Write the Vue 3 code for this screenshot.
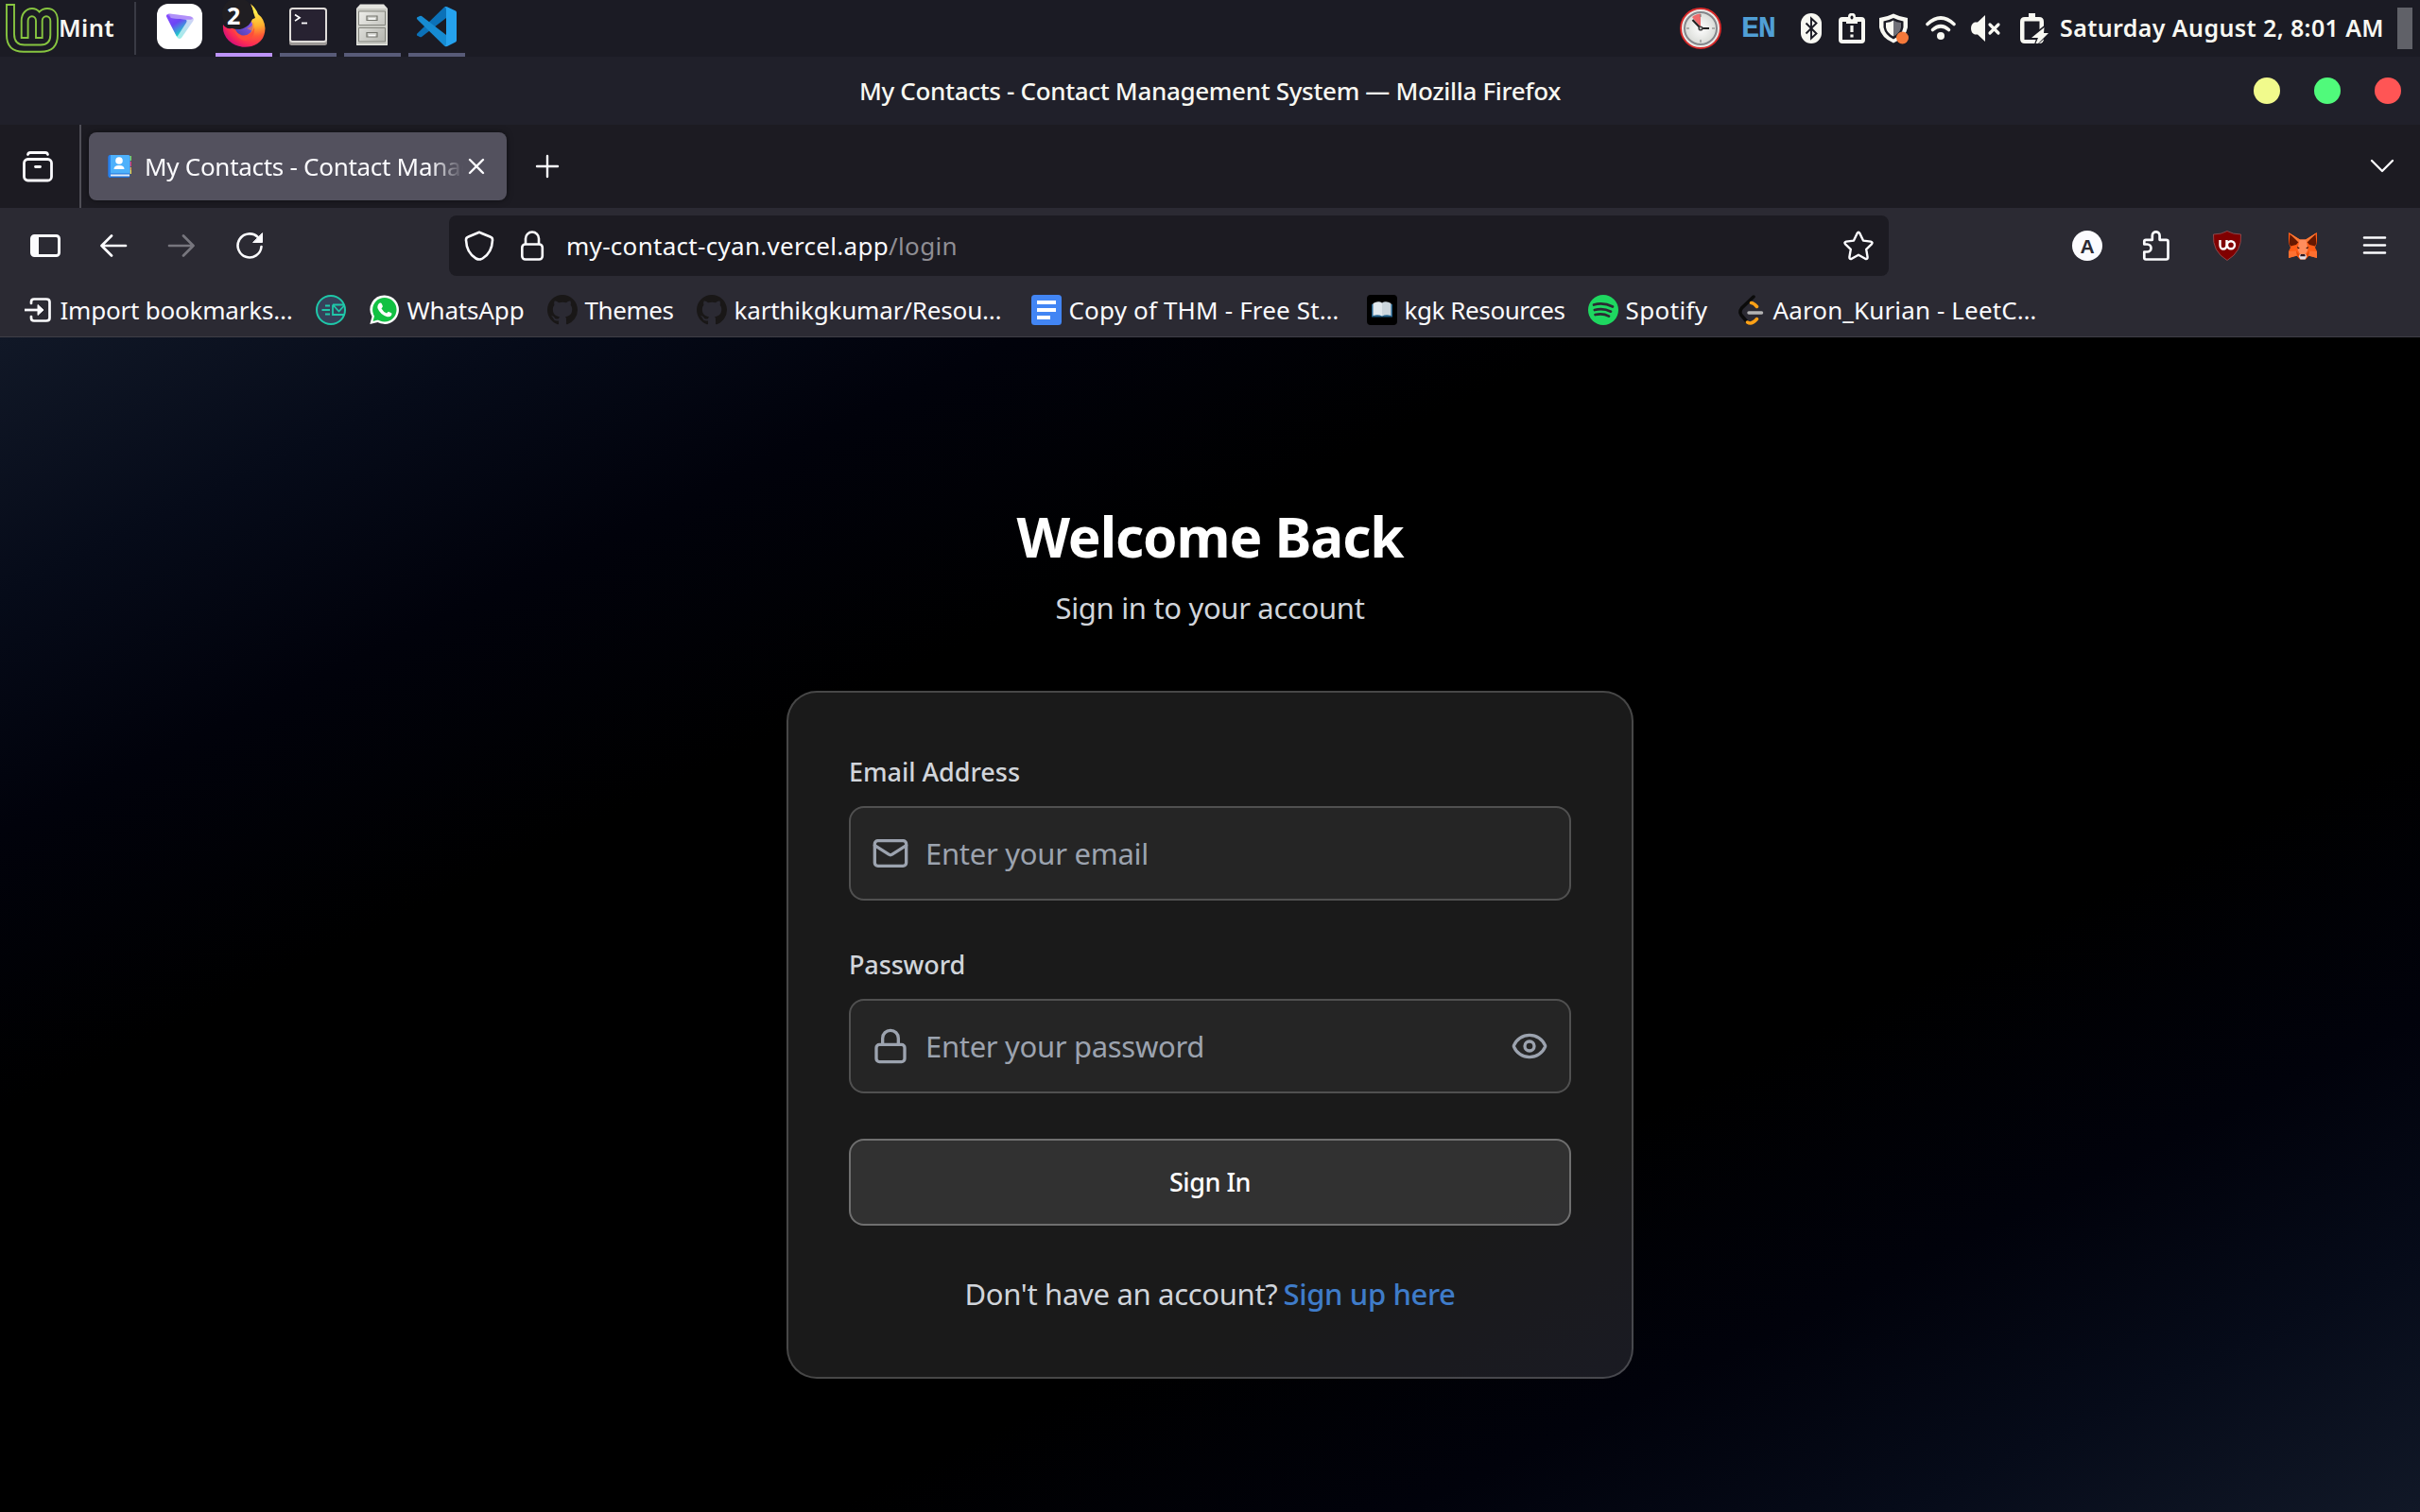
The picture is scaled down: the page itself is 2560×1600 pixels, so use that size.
<script setup>
const vFit = {
  mounted(el, { value }) {
    const range = document.createRange()
    range.selectNodeContents(el)
    const natural = range.getBoundingClientRect().width
    el.style.letterSpacing = (value - natural) / el.textContent.trim().length + 'px'
  }
}

const bookmarks = [
  { icon: 'import', label: 'Import bookmarks…', width: 246 },
  { icon: 'tempmail', label: '', width: 0 },
  { icon: 'whatsapp', label: 'WhatsApp', width: 124 },
  { icon: 'github', label: 'Themes', width: 94 },
  { icon: 'github', label: 'karthikgkumar/Resou…', width: 283 },
  { icon: 'docs', label: 'Copy of THM - Free St…', width: 286 },
  { icon: 'book', label: 'kgk Resources', width: 170 },
  { icon: 'spotify', label: 'Spotify', width: 87 },
  { icon: 'leetcode', label: 'Aaron_Kurian - LeetC…', width: 279 }
]
</script>

<template>
  <div class="desktop">
    <header class="panel">
      <div class="menu">
        <svg class="mint" width="62" height="60" viewBox="0 0 62 60" fill="none" stroke="#87c540" stroke-width="1.9">
          <path d="M7 5H15V36Q15 47.5 26 47.5H43Q53.3 47.5 53.3 37V22a4.3 4.8 0 0 0-8.6 0V40H38V22a4.2 4.8 0 0 0-8.4 0V40H22.7V22C22.7 14 28 9 34 9Q38.5 9 41.6 12.6Q45 9 50 9C57 9 61 14 61 22V37Q61 54.8 43 54.8H25Q7 54.8 7 37Z" />
        </svg>
        <span v-fit="59" class="menu-label">Mint</span>
      </div>
      <div class="divider"></div>
      <div class="tasks">
        <div class="task plain">
          <svg width="60" height="60" viewBox="0 0 60 60">
            <defs>
              <linearGradient id="pv1" x1="0" y1="0" x2=".6" y2="1"><stop offset="0" stop-color="#8a4dff" /><stop offset=".5" stop-color="#6b45f5" /><stop offset="1" stop-color="#15e0c4" /></linearGradient>
              <linearGradient id="pv2" x1="1" y1="0" x2=".4" y2="1"><stop offset="0" stop-color="#dccbfa" /><stop offset="1" stop-color="#9df0e8" /></linearGradient>
            </defs>
            <rect x="4" y="4" width="48" height="48" rx="12" fill="#fff" />
            <path d="M16 14.5 L40 17.5 Q44 18.500 42.500 22 L30 40 Q27.500 42.500 25 39 Z" fill="url(#pv2)" />
            <path d="M14 17.500 Q13.500 14.500 17 15 L19 19 L34 20.500 Q36.500 21.500 35 24 L26 38 Q25.500 39.500 24 37 Z" fill="url(#pv1)" />
            <path d="M15 15.200 Q16 14.300 18 14.500 L39 17.300 Q42 18 42 20 Q38 21.500 33 20.400 L19 18.900 Z" fill="#a878fa" opacity=".75" />
          </svg>
        </div>
        <div class="task active">
          <svg width="60" height="60" viewBox="0 0 60 60">
            <defs>
              <radialGradient id="ff1" cx=".8" cy=".15" r=".95"><stop offset="0" stop-color="#fff44f" /><stop offset=".38" stop-color="#ffb02e" /><stop offset=".62" stop-color="#ff5a36" /><stop offset=".85" stop-color="#fb2a55" /><stop offset="1" stop-color="#d81276" /></radialGradient>
              <linearGradient id="ff2" x1="1" y1="0" x2="0" y2="1"><stop offset="0" stop-color="#9059ff" /><stop offset="1" stop-color="#4a3fa8" /></linearGradient>
            </defs>
            <path d="M8 26Q11 31 17 30L42 19Q39 10 37 4Q43 9 45 15Q52 20 52.500 30Q52 45 38 49Q24 52 14 43Q7 36 8 26Z" fill="url(#ff1)" />
            <circle cx="30" cy="28" r="9.500" fill="url(#ff2)" />
            <path d="M18 28Q22 37 30 38Q38 38 41 29Q42 41 32 43Q22 43 18 28Z" fill="#ff4a3c" opacity=".85" />
            <path d="M33 30Q39 29 40 23Q42 29 39 33Z" fill="#ff8a30" opacity=".6" />
            <circle cx="23.500" cy="14.500" r="16.500" fill="#201e22" />
          </svg>
          <span class="badge">2</span>
        </div>
        <div class="task open">
          <svg width="60" height="60" viewBox="0 0 60 60">
            <rect x="10" y="39" width="40" height="9" rx="2.500" fill="#9b9795" />
            <rect x="10" y="8" width="40" height="37" rx="3.500" fill="#dfdcd9" />
            <rect x="12" y="10" width="36" height="33" rx="1.500" fill="#272231" />
            <path d="M16 15.500l5 3.300-5 3.300" fill="none" stroke="#fff" stroke-width="1.700" />
            <path d="M23 24.500h6" stroke="#fff" stroke-width="1.800" />
          </svg>
        </div>
        <div class="task open">
          <svg width="60" height="60" viewBox="0 0 60 60">
            <defs><linearGradient id="cab" x1="0" y1="0" x2="1" y2="1"><stop offset="0" stop-color="#eeeeea" /><stop offset="1" stop-color="#b4b5af" /></linearGradient></defs>
            <path d="M13 9L17 4.500H42L46 9V48H13Z" fill="#e4e4e0" />
            <path d="M13 9H46V48H13Z" fill="#c9cac4" />
            <path d="M15.500 12h28v14.500h-28zM15.500 29.500h28v14.500h-28z" fill="url(#cab)" stroke="#85867f" stroke-width="1" />
            <path d="M24 17h11v4.500h-11zM24 34.500h11v4.500h-11z" fill="#cfd0cb" stroke="#74756e" stroke-width="1.200" />
            <path d="M26 20h7M26 37.500h7" stroke="#fff" stroke-width="1.500" />
            <path d="M13.500 9V47.500H45.500V9" fill="none" stroke="#e9eae4" stroke-width="1" />
          </svg>
        </div>
        <div class="task open">
          <svg width="60" height="60" viewBox="0 0 60 60">
            <path d="M9 37.500q-.6-1 .6-2.200L38 7.500 40 7v12L14 39q-1 .5-2 0Z" fill="#0b71b8" />
            <path d="M9 18.500q-.6 1 .6 2.200L38 48.500 40 49V37L14 17q-1-.5-2 0Z" fill="#168bd2" />
            <path d="M38 7.500Q39 6.500 41 7.200L50 11.500Q51 12 51 13.500V42.500Q51 44 50 44.600L41 49Q39 49.500 38 48.500Q40 49 40 46V10Q40 7 38 7.500Z" fill="#25a2ee" />
          </svg>
        </div>
      </div>
      <div class="tray">
        <svg width="46" height="46" viewBox="0 0 46 46">
          <defs><radialGradient id="clk"><stop offset="0" stop-color="#fff" /><stop offset="1" stop-color="#d9dbd7" /></radialGradient></defs>
          <circle cx="23" cy="23" r="21" fill="#e9e9e7" stroke="#d92a2a" stroke-width="2" />
          <circle cx="23" cy="23" r="17" fill="url(#clk)" stroke="#84868a" stroke-width="2" />
          <path d="M23 22L14 11Q18 7.500 23 7.500Z" fill="#f0696b" />
          <path d="M23 8v3M23 35v3M8 23h3M35 23h3" stroke="#777" stroke-width="1" />
          <path d="M14.500 14L23 23H32" fill="none" stroke="#222" stroke-width="2.200" />
          <circle cx="23" cy="23" r="2.600" fill="#444" /><circle cx="23" cy="23" r="1" fill="#ddd" />
        </svg>
        <span class="lang">EN</span>
        <svg width="24" height="32" viewBox="0 0 24 32">
          <rect x="1" width="22" height="32" rx="11" fill="#f8f8f2" />
          <path d="M6.500 10.500L17.500 21.500 12 26.500V5.500L17.500 10.500 6.500 21.500" fill="none" stroke="#1b1b24" stroke-width="1.900" />
        </svg>
        <svg width="28" height="32" viewBox="0 0 28 32">
          <path d="M4 4H10A4 4.200 0 0 1 18 4H24Q28 4 28 8V28Q28 32 24 32H4Q0 32 0 28V8Q0 4 4 4ZM4 9V28H24V9H20V11H8V9ZM14 2.500a1.500 2 0 1 0 .01 0Z" fill="#f8f8f2" fill-rule="evenodd" />
          <path d="M14 13v7M14 22.500v3" stroke="#f8f8f2" stroke-width="3.200" />
        </svg>
        <svg width="34" height="34" viewBox="0 0 34 34">
          <path d="M17 1.500Q24 5 32 6V16Q30 27 17 32.500Q4 27 2 16V6Q10 5 17 1.500Z" fill="#f8f8f2" />
          <path d="M17 6Q22 8.500 27.500 9.500V16Q26 24 17 28.500Q8 24 6.500 16V9.500Q12 8.500 17 6Z" fill="#1b1b24" />
          <path d="M17 8.500V25.500Q10 22 9 16V11Q14 10.500 17 8.500Z" fill="#f8f8f2" />
          <path d="M17 8.500V25.500Q24 22 25 16V11Q20 10.500 17 8.500Z" fill="#707078" />
          <circle cx="26.500" cy="27" r="6.500" fill="#f5793a" />
        </svg>
        <svg width="32" height="26" viewBox="0 0 32 26" fill="none" stroke="#f8f8f2" stroke-width="3.600" stroke-linecap="round">
          <path d="M2 8.500Q16-4.500 30 8.500" /><path d="M7.500 14.500Q16 7 24.500 14.500" /><circle cx="16" cy="21" r="4" fill="#f8f8f2" stroke="none" />
        </svg>
        <svg width="32" height="30" viewBox="0 0 32 30">
          <path d="M15 1V29L7 21.500H4Q0 20 0 15Q0 10 4 8.500H7Z" fill="#f8f8f2" />
          <path d="M20 11l9 9M29 11l-9 9" stroke="#f8f8f2" stroke-width="3.200" stroke-linecap="round" />
        </svg>
        <svg width="30" height="32" viewBox="0 0 30 32">
          <path d="M9 0h7v4h4q5 0 5 5v18q0 5-5 5H5q-5 0-5-5V9q0-5 5-5h4zM4.500 8.500V28H20.500V8.500Z" fill="#f8f8f2" fill-rule="evenodd" />
          <path d="M25.500 15L12 26H19L16.500 33L30 21H25Z" fill="#f8f8f2" stroke="#1b1b24" stroke-width="3" />
          <path d="M25.500 15L12 26H19L16.500 32H19L30 21H25Z" fill="#f8f8f2" />
        </svg>
        <span v-fit="343" class="clock">Saturday August 2, 8:01 AM</span>
        <div class="corner"></div>
      </div>
    </header>

    <div class="titlebar">
      <span></span>
      <span v-fit="742" class="title">My Contacts - Contact Management System — Mozilla Firefox</span>
      <div class="controls">
        <i class="dot min"></i><i class="dot max"></i><i class="dot close"></i>
      </div>
    </div>

    <div class="tabbar">
      <div class="view">
        <svg width="34" height="34" viewBox="0 0 34 34" fill="none" stroke="#fbfbfe" stroke-width="2.800" stroke-linecap="round">
          <rect x="2.500" y="9.500" width="29" height="22.500" rx="4" /><path d="M6.500 4.500Q7 2.500 9 2.500H25Q27 2.500 27.500 4.500" /><path d="M14.500 17.500H19.500" />
        </svg>
      </div>
      <div class="tab">
        <svg class="favicon" width="26" height="26" viewBox="0 0 26 26">
          <path d="M20 2h5v5h-5z" fill="#7ed957" /><path d="M20 8h5v5h-5z" fill="#e8356d" /><path d="M20 14h5v3h-5z" fill="#f0a03a" /><path d="M20 17h5v4h-5z" fill="#f7d43c" />
          <rect x=".5" y="1" width="23" height="24" rx="2" fill="#1d6fd8" />
          <path d="M3 1H21.500Q23.500 1 23.500 3V20.500H3Z" fill="#4eb1fb" /><path d="M3 21.500H23V23.500H3Z" fill="#e6eef7" /><path d="M.5 3Q.5 1 3 1V25Q.5 25 .5 23Z" fill="#2a82ec" />
          <circle cx="12" cy="7" r="3.800" fill="#fff" /><path d="M6.500 16Q6.500 12 12 12Q17.500 12 17.500 16Z" fill="#fff" />
        </svg>
        <div class="tab-label"><span v-fit="350">My Contacts - Contact Manag</span></div>
        <svg class="x" width="18" height="18" viewBox="0 0 18 18" stroke="#fbfbfe" stroke-width="2.300" stroke-linecap="round"><path d="M2 2L16 16M16 2L2 16" /></svg>
      </div>
      <svg class="plus" width="26" height="26" viewBox="0 0 26 26" stroke="#fbfbfe" stroke-width="2.400" stroke-linecap="round"><path d="M13 2V24M2 13H24" /></svg>
      <svg class="chevron" width="26" height="16" viewBox="0 0 26 16" fill="none" stroke="#fbfbfe" stroke-width="2.300" stroke-linecap="round" stroke-linejoin="round"><path d="M2 2L13 13L24 2" /></svg>
    </div>

    <div class="chrome">
      <div class="toolbar">
        <div class="nav">
          <svg width="32" height="32" viewBox="0 0 32 32"><rect x="1.500" y="5.500" width="29" height="21" rx="3" fill="none" stroke="#fbfbfe" stroke-width="3" /><path d="M2 6H9V26H2Z" fill="#fbfbfe" /></svg>
          <svg width="32" height="32" viewBox="0 0 32 32" fill="none" stroke="#fbfbfe" stroke-width="2.700" stroke-linecap="round" stroke-linejoin="round"><path d="M29 16H3.500M14 5.500L3.500 16L14 26.500" /></svg>
          <svg width="32" height="32" viewBox="0 0 32 32" fill="none" stroke="#77767e" stroke-width="2.700" stroke-linecap="round" stroke-linejoin="round"><path d="M3 16H28.500M18 5.500L28.500 16L18 26.500" /></svg>
          <svg width="32" height="32" viewBox="0 0 32 32" fill="none" stroke="#fbfbfe" stroke-width="2.600" stroke-linecap="round"><path d="M28.500 17A12.500 12.500 0 1 1 25 7.200L26.500 8.500" /><path d="M29.500 3V12.500H20Z" fill="#fbfbfe" stroke-width="1" stroke-linejoin="round" /></svg>
        </div>
        <div class="url">
          <svg width="32" height="32" viewBox="0 0 32 32" fill="none" stroke="#fbfbfe" stroke-width="2.600" stroke-linejoin="round"><path d="M16 1.800L28 6.800Q30 7.500 30 10Q29.500 23.500 19.500 29.500Q16 31.500 12.500 29.500Q2.500 23.500 2 10Q2 7.500 4 6.800Z" /></svg>
          <svg width="32" height="32" viewBox="0 0 32 32" fill="none" stroke="#fbfbfe" stroke-width="2.600"><rect x="5.300" y="14.500" width="21.500" height="16" rx="3.500" /><path d="M9 14.500V8.500A7 7 0 0 1 23 8.500V14.500" /></svg>
          <p class="address"><span v-fit="341">my-contact-cyan.vercel.app</span><span v-fit="73" class="path">/login</span></p>
          <svg width="32" height="32" viewBox="0 0 32 32" fill="none" stroke="#fbfbfe" stroke-width="2.400" stroke-linejoin="round"><path d="M14.600 2.900Q16 .7 17.400 2.900L21 10.600L29 11.600Q31.500 12.300 29.900 14.300L24.200 19.900L25.600 28Q25.700 30.700 23.200 29.800L16 25.800L8.800 29.800Q6.300 30.700 6.400 28L7.800 19.900L2.100 14.300Q.5 12.300 3 11.600L11 10.600Z" /></svg>
        </div>
        <div class="extensions">
          <span class="avatar">A</span>
          <svg width="32" height="32" viewBox="0 0 32 32" fill="none" stroke="#fbfbfe" stroke-width="2.700" stroke-linejoin="round"><path d="M4 30.500Q2.300 30.500 2.300 28.800V22.500H5.500A4 4 0 0 0 5.500 14.500H2.300V11.500Q2.300 9.800 4 9.800H10.800V5.500A3.900 4.200 0 0 1 18.600 5.500V9.800H25.500Q27.500 9.800 27.500 11.500V28.800Q27.500 30.500 25.500 30.500Z" /></svg>
          <svg width="32" height="32" viewBox="0 0 32 32"><path d="M16 .5Q22 4 30.500 4Q32 22 16 31.500Q0 22 1.500 4Q10 4 16 .5Z" fill="#800000" stroke="#9a5458" stroke-width=".8" /><path d="M8.500 10V15.500A3.200 3.700 0 0 0 15.500 15.500V10" fill="none" stroke="#fff" stroke-width="2.400" /><circle cx="20" cy="15.200" r="4" fill="none" stroke="#fff" stroke-width="2.400" /></svg>
          <svg width="32" height="32" viewBox="0 0 32 32">
            <path d="M1 2L13 9.500H19L31 2V13L29 18L31 22V29L22.500 26.500L19 30.500H13L9.500 26.500L1 29V22L3 18L1 13Z" fill="#ff5c16" />
            <path d="M2.500 4L12 11.500L9 15L3 16.500L1.500 13.500ZM29.500 4L20 11.500L23 15L29 16.500L30.500 13.500Z" fill="#661800" />
            <path d="M1 2L13 9.500L11.500 12.500ZM31 2L19 9.500L20.500 12.500Z" fill="#ff7a35" />
            <path d="M12.500 9.500H19.500L21.500 20L19 25H13L10.500 20Z" fill="#ff8d5d" />
            <path d="M1 22L9 21.500L10.500 26.500L1 29ZM31 22L23 21.500L21.500 26.500L31 29Z" fill="#ff7030" />
            <path d="M9 21.500L12.500 26L10 27ZM23 21.500L19.500 26L22 27Z" fill="#e34807" />
            <path d="M10 16.800L12.800 18.600L10.800 19.500ZM22 16.800L19.200 18.600L21.200 19.500Z" fill="#33110a" />
            <path d="M12.800 25H19.200L20 27.500L18.500 30.500H13.500L12 27.500Z" fill="#e6e0e6" /><path d="M13.800 25H18.200L18.800 27.300H13.200Z" fill="#2d1720" />
          </svg>
          <svg width="32" height="32" viewBox="0 0 32 32" stroke="#fbfbfe" stroke-width="2.600" stroke-linecap="round"><path d="M5 7.500H27M5 15.500H27M5 23.500H27" /></svg>
        </div>
      </div>
      <nav class="bookmarks">
        <a v-for="(b, i) in bookmarks" :key="i" class="bookmark">
          <svg v-if="b.icon === 'import'" class="small" width="30" height="30" viewBox="0 0 30 30" fill="none" stroke="#fbfbfe" stroke-width="2.700"><path d="M8 8V6.500Q8 3.500 11 3.500H24Q27.500 3.500 27.500 6.500V23.500Q27.500 26.500 24 26.500H11Q8 26.500 8 23.500V22" stroke-linecap="round" /><path d="M1 15H16" /><path d="M15 9.500L21 15L15 20.500Z" fill="#fbfbfe" stroke-width="1" /></svg>
          <svg v-else-if="b.icon === 'tempmail'" width="32" height="32" viewBox="0 0 32 32" fill="none" stroke="#1fc8a9" stroke-width="1.800"><circle cx="16" cy="16" r="15" fill="#35425a" stroke-width="2" /><path d="M18 10.500H30M18 10.500V21H30.500M18.500 11L24.500 17.500L30.500 11" /><path d="M10 11.500H15M6.500 16H15M10 20.500H15" /></svg>
          <svg v-else-if="b.icon === 'whatsapp'" width="32" height="32" viewBox="0 0 32 32"><path d="M15.800 .5A15 15.200 0 1 1 8.500 28.900L.3 31L2.500 23A15 15 0 0 1 15.800 .5Z" fill="#fff" /><circle cx="15.800" cy="15.700" r="12.700" fill="#12c143" /><path d="M3.500 28L5.500 21L10.500 26Z" fill="#12c143" /><path d="M10.800 8.500Q12.200 8 12.800 9.500L13.900 12Q14 13 12.500 14.400Q14.500 18 18.100 19.500Q19.500 17.500 20.300 17.900L23.200 19.300Q23.800 20 23 21.700Q21.200 23.800 18 23Q11 20.500 8.400 14Q8 10 10.800 8.500Z" fill="#fff" /></svg>
          <svg v-else-if="b.icon === 'github'" width="32" height="32" viewBox="0 0 16 16"><path fill="#191717" d="M8 0C3.580 0 0 3.580 0 8c0 3.540 2.290 6.530 5.470 7.590.4.070.55-.17.55-.38 0-.19-.01-.82-.01-1.490-2.010.37-2.530-.49-2.690-.94-.09-.23-.48-.94-.82-1.130-.28-.15-.68-.52-.01-.53.63-.01 1.080.58 1.230.82.72 1.210 1.870.87 2.330.66.070-.52.28-.87.51-1.070-1.780-.2-3.640-.89-3.640-3.950 0-.87.31-1.590.82-2.150-.08-.2-.36-1.020.08-2.120 0 0 .67-.21 2.200.82.64-.18 1.320-.27 2-.27.68 0 1.360.09 2 .27 1.530-1.040 2.200-.82 2.200-.82.44 1.100.16 1.920.08 2.120.51.56.82 1.270.82 2.150 0 3.070-1.870 3.750-3.650 3.950.29.25.54.73.54 1.480 0 1.070-.01 1.930-.01 2.200 0 .21.15.46.55.38A8.013 8.013 0 0 0 16 8c0-4.420-3.580-8-8-8z" /></svg>
          <svg v-else-if="b.icon === 'docs'" width="32" height="32" viewBox="0 0 32 32"><rect width="32" height="32" rx="3.500" fill="#4285f4" /><path d="M6 8H26M6 16H26M6 24H20" stroke="#fff" stroke-width="4" /></svg>
          <svg v-else-if="b.icon === 'book'" width="32" height="32" viewBox="0 0 32 32"><rect width="32" height="32" rx="4" fill="#000" /><path d="M5 10H27V23.500H5Z" fill="#22608a" /><path d="M6.500 9Q12 6 16 8.500V22.500Q12 20.500 6.500 22Z" fill="#e1e8ed" /><path d="M25.500 9Q20 6 16 8.500V22.500Q20 20.500 25.500 22Z" fill="#ccd6dd" /></svg>
          <svg v-else-if="b.icon === 'spotify'" width="32" height="32" viewBox="0 0 32 32"><circle cx="16" cy="16" r="16" fill="#1ed760" /><path d="M6 10.500Q16 7.500 26 12.500M6.800 16Q16 13.500 24 17.700M7.500 21Q15.500 19 22 22.600" fill="none" stroke="#2b2a33" stroke-width="2.700" stroke-linecap="round" /></svg>
          <svg v-else width="32" height="32" viewBox="0 0 32 32" fill="none" stroke-width="3.500" stroke-linecap="round"><path d="M19 2L6.500 14Q3.500 18 6 21.500L12 28.500" stroke="#0b0b0b" /><path d="M16.500 8.500Q19 8.500 22.500 12.500M12.500 29Q17 32 22.500 25.500" stroke="#ffa116" /><path d="M14 19H27.500" stroke="#b3b3b3" /></svg>
          <span v-if="b.label" v-fit="b.width">{{ b.label }}</span>
        </a>
      </nav>
    </div>

    <main class="page">
      <h1 v-fit="409">Welcome Back</h1>
      <p class="sub"><span v-fit="327">Sign in to your account</span></p>
      <form class="card" @submit.prevent>
        <label class="label"><span v-fit="181">Email Address</span></label>
        <div class="field">
          <svg width="40" height="40" viewBox="0 0 24 24" fill="none" stroke="#9ca3af" stroke-width="2" stroke-linecap="round" stroke-linejoin="round"><rect x="2" y="4" width="20" height="16" rx="2" /><path d="m22 7-8.970 5.700a1.940 1.940 0 0 1-2.060 0L2 7" /></svg>
          <span v-fit="236" class="placeholder">Enter your email</span>
        </div>
        <label class="label second"><span v-fit="123">Password</span></label>
        <div class="field">
          <svg width="40" height="40" viewBox="0 0 24 24" fill="none" stroke="#9ca3af" stroke-width="2" stroke-linecap="round" stroke-linejoin="round"><rect x="3" y="11" width="18" height="11" rx="2" /><path d="M7 11V7a5 5 0 0 1 10 0v4" /></svg>
          <span v-fit="295" class="placeholder">Enter your password</span>
          <svg class="eye" width="40" height="40" viewBox="0 0 24 24" fill="none" stroke="#9ca3af" stroke-width="2" stroke-linecap="round" stroke-linejoin="round"><path d="M2.062 12.348a1 1 0 0 1 0-.696 10.750 10.750 0 0 1 19.876 0 1 1 0 0 1 0 .696 10.750 10.750 0 0 1-19.876 0" /><circle cx="12" cy="12" r="3" /></svg>
        </div>
        <button class="submit"><span v-fit="86">Sign In</span></button>
        <p class="signup"><span v-fit="331">Don't have an account?</span><a v-fit="182">Sign up here</a></p>
      </form>
    </main>
  </div>
</template>

<style>
body { margin: 0; background: #000; overflow: hidden; }
</style>

<style scoped>
.desktop {
  width: 2560px;
  height: 1600px;
  display: flex;
  flex-direction: column;
  font-family: "Noto Sans", "Open Sans", sans-serif;
  font-size: 26px;
  font-weight: 400;
  color: #fbfbfe;
  white-space: nowrap;
  overflow: hidden;
}
svg { display: block; flex: none; }
p, h1 { margin: 0; }

.panel { height: 60px; display: flex; background: #1b1b24; color: #f8f8f2; }
.menu { width: 142px; display: flex; align-items: center; }
.menu-label { font-size: 25.5px; font-weight: 600; line-height: 56px; padding-bottom: 2px; }
.divider { width: 2px; height: 56px; margin-top: 2px; background: #393a44; }
.tasks { display: flex; gap: 8px; margin-left: 18px; }
.task { position: relative; width: 60px; height: 60px; box-sizing: border-box; }
.task.active { border-bottom: 4px solid #bd93f9; }
.task.open { border-bottom: 4px solid #585b78; }
.task.plain { margin-right: -2px; }
.badge { position: absolute; left: 12px; top: -1px; font-size: 25px; font-weight: 700; line-height: 34px; color: #fff; }
.tray {
  margin-left: auto;
  display: grid;
  grid-template-columns: 66px 62px 41px 41px 51px 48px 52px 42px 357px 24px;
  align-items: center;
}
.lang { font-family: "Liberation Mono", monospace; font-weight: 700; font-size: 32px; line-height: 58px; padding-top: 2px; letter-spacing: -1.5px; color: #509fd6; }
.clock { font-size: 25px; font-weight: 600; line-height: 58px; padding-bottom: 2px; }
.corner { width: 16px; height: 44px; background: #606168; }

.titlebar { height: 72px; display: grid; grid-template-columns: 1fr auto 1fr; align-items: center; background: #20202a; }
.title { font-size: 26px; font-weight: 500; line-height: 70px; color: #f8f8f2; }
.controls { display: flex; justify-content: flex-end; gap: 36px; padding-right: 20px; }
.dot { width: 28px; height: 28px; border-radius: 50%; }
.min { background: #f1fa8c; }
.max { background: #50fa7b; }
.close { background: #ff5555; }

.tabbar { height: 88px; display: flex; align-items: center; background: #1c1b22; }
.view { width: 86px; height: 88px; display: flex; align-items: center; justify-content: center; border-right: 2px solid #4f4e56; box-sizing: border-box; padding-right: 4px; }
.tab { width: 442px; height: 72px; margin-left: 8px; border-radius: 8px; background: #53515e; display: flex; align-items: center; box-shadow: 0 0 6px rgba(0, 0, 0, .5); }
.favicon { margin-left: 20px; }
.tab-label { width: 354px; margin-left: 13px; margin-right: -20px; line-height: 70px; -webkit-mask-image: linear-gradient(90deg, #000 302px, transparent 337px); mask-image: linear-gradient(90deg, #000 302px, transparent 337px); }
.x { margin-left: 8px; }
.plus { margin-left: 30px; }
.chevron { margin-left: auto; margin-right: 27px; }

.chrome { height: 137px; box-sizing: border-box; background: #2b2a33; border-bottom: 1px solid #3f3e46; }
.toolbar { height: 80px; display: flex; align-items: center; }
.nav { width: 475px; box-sizing: border-box; padding-left: 32px; display: flex; gap: 40px; }
.url { width: 1523px; height: 64px; box-sizing: border-box; padding: 0 16px; display: flex; align-items: center; background: #1c1b22; border-radius: 8px; }
.url svg + svg { margin-left: 24px; }
.address { flex: 1; display: flex; margin-left: 20px; line-height: 64px; }
.path { color: #8f8e94; }
.extensions { margin-left: auto; padding-right: 32px; display: grid; grid-template-columns: 74px 74px 80px 76px 32px; }
.avatar { width: 32px; height: 32px; border-radius: 50%; background: #fbfbfe; color: #2b2a33; font: 700 21px/33px "Liberation Sans", sans-serif; text-align: center; }
.bookmarks {
  height: 56px;
  padding-left: 25px;
  display: grid;
  grid-template-columns: 309px 57px 188px 158px 354px 355px 234px 156px auto;
  align-items: center;
}
.bookmark { display: flex; align-items: center; gap: 7.5px; line-height: 54px; }
.small { margin-right: 1px; }

.page {
  flex: 1;
  display: flex;
  flex-direction: column;
  align-items: center;
  padding-top: 174px;
  box-sizing: border-box;
  background: linear-gradient(to bottom right, #111827, #060b19 11%, #01020b 21%, #000 33%, #000 67%, #01020b 79%, #060b19 89%, #111827);
}
h1 { font-size: 58.5px; line-height: 72px; font-weight: 700; color: #fff; }
.sub { margin-top: 16px; font-size: 31px; line-height: 48px; color: #d1d5db; }
.card {
  width: 896px;
  height: 728px;
  box-sizing: border-box;
  margin-top: 64px;
  padding: 64px;
  border: 2px solid rgba(255, 255, 255, .2);
  border-radius: 32px;
  background: rgba(255, 255, 255, .1);
}
.label { display: block; font-size: 27px; line-height: 40px; font-weight: 500; color: #d1d5db; }
.second { margin-top: 48px; }
.field { height: 100px; box-sizing: border-box; margin-top: 16px; padding: 0 22px; display: flex; align-items: center; border: 2px solid rgba(255, 255, 255, .2); border-radius: 16px; background: rgba(255, 255, 255, .05); }
.placeholder { margin-left: 17px; font-size: 31px; line-height: 48px; color: #9ca3af; }
.eye { margin-left: auto; }
.submit { display: block; width: 100%; height: 92px; margin-top: 48px; padding: 0; border: 2px solid rgba(255, 255, 255, .3); border-radius: 16px; background: rgba(255, 255, 255, .1); font: 500 27px/40px "Noto Sans", "Open Sans", sans-serif; color: #fff; }
.signup { margin-top: 48px; display: flex; justify-content: center; gap: 6px; font-size: 31px; line-height: 48px; color: #d1d5db; }
.signup a { color: #3f7cc9; font-weight: 500; }
</style>
